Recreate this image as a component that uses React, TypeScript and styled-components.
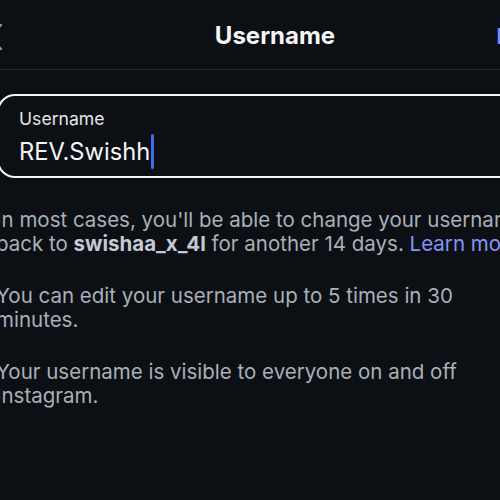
import styled, { createGlobalStyle } from 'styled-components';

const GlobalStyle = createGlobalStyle`
  html, body {
    margin: 0;
    padding: 0;
    background: #0c1014;
    overflow: hidden;
  }
  body {
    font-family: Inter, "Noto Sans", "Liberation Sans", sans-serif;
    -webkit-font-smoothing: antialiased;
  }
`;

function App(): JSX.Element {
    return (
        <>
            <GlobalStyle />
            <Screen>
                <Header>
                    <BackButton aria-label="Back">
                        <svg width="16" height="28" viewBox="0 0 16 28" fill="none">
                            <path d="M14 2 L2 14 L14 26" stroke="#8e9399" strokeWidth="2.4" strokeLinecap="round" strokeLinejoin="round" />
                        </svg>
                    </BackButton>
                    <Title>Username</Title>
                    <DoneButton>Done</DoneButton>
                </Header>

                <Body>
                    <Field>
                        <FieldLabel>Username</FieldLabel>
                        <FieldValue>
                            REV.Swishh
                            <Caret />
                        </FieldValue>
                    </Field>

                    <Info>
                        In most cases, you'll be able to change your username back to <Strong>swishaa_x_4l</Strong> for another 14 days. <Link>Learn more</Link>
                    </Info>
                    <Info>You can edit your username up to 5 times in 30 minutes.</Info>
                    <Info>Your username is visible to everyone on and off Instagram.</Info>
                </Body>
            </Screen>
        </>
    );
}

const Screen = styled.div`
  width: 590px;
  margin-left: -20px;
  height: 500px;
  background: #0c1014;
  color: #f5f5f5;
`;

const Header = styled.header`
  display: grid;
  grid-template-columns: 1fr auto 1fr;
  align-items: center;
  height: 69px;
  padding: 0 7px;
  border-bottom: 1px solid #262a2e;
`;

const BackButton = styled.div`
  display: flex;
  align-items: center;
  justify-self: start;
  padding-top: 4px;
`;

const Title = styled.h1`
  margin: 0;
  padding-top: 1px;
  font-size: 24px;
  font-weight: 700;
  color: #f5f5f5;
`;

const DoneButton = styled.div`
  justify-self: end;
  margin-right: 11px;
  font-size: 22px;
  font-weight: 600;
  color: #7b8ef5;
  padding-top: 2px;
`;

const Body = styled.main`
  padding: 24px 40px 0 16px;
`;

const Field = styled.div`
  display: flex;
  flex-direction: column;
  box-sizing: border-box;
  height: 84px;
  margin: 0 -24px 0 1px;
  border: 2px solid #f5f5f5;
  border-radius: 18px;
  padding: 12px 20px 0 20px;
`;

const FieldLabel = styled.div`
  font-size: 17.6px;
  line-height: 22px;
  color: #e6e6e6;
`;

const FieldValue = styled.div`
  display: flex;
  align-items: center;
  margin-top: 4px;
  font-size: 23.7px;
  line-height: 34px;
  color: #f5f5f5;
`;

const Caret = styled.span`
  display: inline-block;
  width: 3px;
  height: 35px;
  margin-left: 1px;
  border-radius: 2px;
  background: #3d6ff2;
`;

const Info = styled.p`
  margin: 28px 0 0 0;
  font-size: 20.5px;
  line-height: 24px;
  color: #a8b0b9;

  &:first-of-type {
    margin-top: 30px;
  }
`;

const Strong = styled.b`
  font-weight: 700;
  color: #c4cad1;
`;

const Link = styled.span`
  color: #8595f7;
`;

export default App;
